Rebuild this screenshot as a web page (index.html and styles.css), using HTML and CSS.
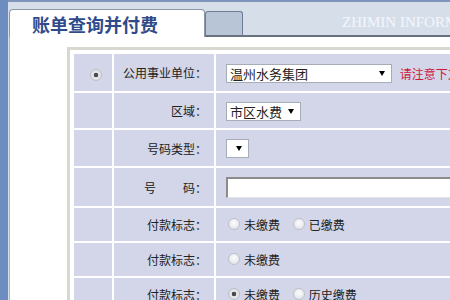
FILE: index.html
```html
<!DOCTYPE html>
<html lang="zh-CN">
<head>
    <meta charset="UTF-8">
    <title>账单查询并付费</title>
    <link rel="stylesheet" href="styles.css">
</head>
<body>
    <div class="page">
        <div class="side"></div>
        <div class="main">
            <div class="tabs">
                <div class="tab active">账单查询并付费</div>
                <div class="tab other"></div>
                <div class="tab-rest"><span class="brand">ZHIMIN INFORMATION</span></div>
            </div>
            <div class="panel">
                <table class="form">
                    <tr class="h1">
                        <td class="pick"><input type="radio" name="kind" checked></td>
                        <td class="label">公用事业单位：</td>
                        <td class="field">
                            <span class="select w-big">温州水务集团<i class="arrow"></i></span>
                            <span class="note">请注意下方说明</span>
                        </td>
                    </tr>
                    <tr class="h2">
                        <td class="pick"></td>
                        <td class="label">区域：</td>
                        <td class="field"><span class="select w-mid">市区水费<i class="arrow"></i></span></td>
                    </tr>
                    <tr class="h3">
                        <td class="pick"></td>
                        <td class="label">号码类型：</td>
                        <td class="field"><span class="select w-small"><i class="arrow"></i></span></td>
                    </tr>
                    <tr class="h4">
                        <td class="pick"></td>
                        <td class="label">号<span class="sp"></span>码：</td>
                        <td class="field"><input class="text" type="text"></td>
                    </tr>
                    <tr class="h5">
                        <td class="pick"></td>
                        <td class="label">付款标志：</td>
                        <td class="field">
                            <label class="opt"><input type="radio" name="f1">未缴费</label>
                            <label class="opt"><input type="radio" name="f1">已缴费</label>
                        </td>
                    </tr>
                    <tr class="h5">
                        <td class="pick"></td>
                        <td class="label">付款标志：</td>
                        <td class="field">
                            <label class="opt"><input type="radio" name="f2">未缴费</label>
                        </td>
                    </tr>
                    <tr class="h5">
                        <td class="pick"></td>
                        <td class="label">付款标志：</td>
                        <td class="field">
                            <label class="opt"><input type="radio" name="f3" checked>未缴费</label>
                            <label class="opt"><input type="radio" name="f3">历史缴费</label>
                        </td>
                    </tr>
                </table>
            </div>
        </div>
    </div>
</body>
</html>
```

FILE: styles.css
```css
body {
    margin: 0;
    font-family: "Noto Sans CJK SC", "Liberation Sans", sans-serif;
    font-size: 12px;
    color: #222;
    overflow: hidden;
}
.page {
    display: flex;
    width: 450px;
    height: 300px;
    background: #d6deea;
    border-top: 2px solid #7f95ba;
    box-sizing: border-box;
}
.side {
    width: 8px;
    margin-top: -2px;
    background: #6d8dc0;
    flex-shrink: 0;
}
.main {
    flex: 1;
    min-width: 0;
    margin-left: 1px;
    display: flex;
    flex-direction: column;
}
.tabs {
    display: flex;
    align-items: flex-end;
    height: 35px;
    flex-shrink: 0;
}
.tab {
    box-sizing: border-box;
}
.tab.active {
    width: 196px;
    height: 28px;
    background: #fff;
    border: 1px solid #8e98a8;
    border-bottom: none;
    border-radius: 4px 4px 0 0;
    padding-left: 22px;
    font-size: 18px;
    font-weight: bold;
    color: #2f4b8a;
    line-height: 29px;
}
.tab.other {
    width: 38px;
    height: 26px;
    background: #b8c5d7;
    border: 1px solid #6f7d94;
    border-bottom: 2px solid #68717e;
    border-radius: 3px 3px 0 0;
}
.tab-rest {
    flex: 1;
    height: 100%;
    border-bottom: 2px solid #68717e;
    box-sizing: border-box;
    padding-left: 99px;
    overflow: hidden;
    white-space: nowrap;
}
.brand {
    font-family: "Liberation Serif", serif;
    font-size: 15px;
    color: #f3f6fb;
    line-height: 41px;
}
.panel {
    flex: 1;
    background: #fff;
    border-left: 1px solid #a9b7cc;
    padding: 10px 0 0 57px;
    overflow: hidden;
}
.form {
    border: 3px solid #d8d8d0;
    border-right: none;
    border-spacing: 2px;
    padding: 2px 0 2px 2px;
    width: 500px;
}
.form td {
    background: #d2d6e8;
    padding: 0;
    white-space: nowrap;
}
.h1 td { height: 37px; }
.h2 td { height: 35px; }
.h3 td { height: 36px; }
.h4 td { height: 38px; }
.h5 td { height: 33px; }
.pick {
    width: 30px;
    text-align: center;
    padding-left: 8px !important;
}
.label {
    width: 100px;
    text-align: right;
    padding-right: 7px !important;
    box-sizing: border-box;
}
.sp {
    display: inline-block;
    width: 27px;
}
.field {
    padding-left: 10px !important;
}
.select {
    display: inline-flex;
    align-items: center;
    justify-content: space-between;
    box-sizing: border-box;
    height: 19px;
    background: #fff;
    border: 1px solid #a7adb6;
    padding: 0 6px 0 3px;
    font-size: 13px;
    vertical-align: middle;
}
.w-big { width: 166px; }
.w-mid { width: 75px; }
.w-small { width: 23px; }
.arrow {
    width: 0;
    height: 0;
    border-left: 3px solid transparent;
    border-right: 3px solid transparent;
    border-top: 5px solid #000;
    margin-left: auto;
}
.note {
    color: #d0163c;
    margin-left: 5px;
    vertical-align: middle;
}
.text {
    box-sizing: border-box;
    width: 260px;
    height: 21px;
    border: 2px solid #8c8c8c;
    border-right-color: #e4e4e4;
    border-bottom-color: #e4e4e4;
    border-bottom-width: 1px;
    background: #fff;
    vertical-align: middle;
    margin: 0;
}
.opt {
    display: inline-flex;
    align-items: center;
    margin-right: 8px;
}
input[type="radio"] {
    appearance: none;
    -webkit-appearance: none;
    width: 12px;
    height: 12px;
    margin: 0 4px 0 2px;
    border: 1px solid #bcc0c8;
    border-radius: 50%;
    background: radial-gradient(circle at 50% 40%, #fdfdfd, #dcdde2);
    box-sizing: border-box;
    vertical-align: middle;
}
input[type="radio"]:checked {
    background: radial-gradient(circle, #4a4a4a 0 2px, #e9e9ec 2.6px, #d6d7dc);
}
```
